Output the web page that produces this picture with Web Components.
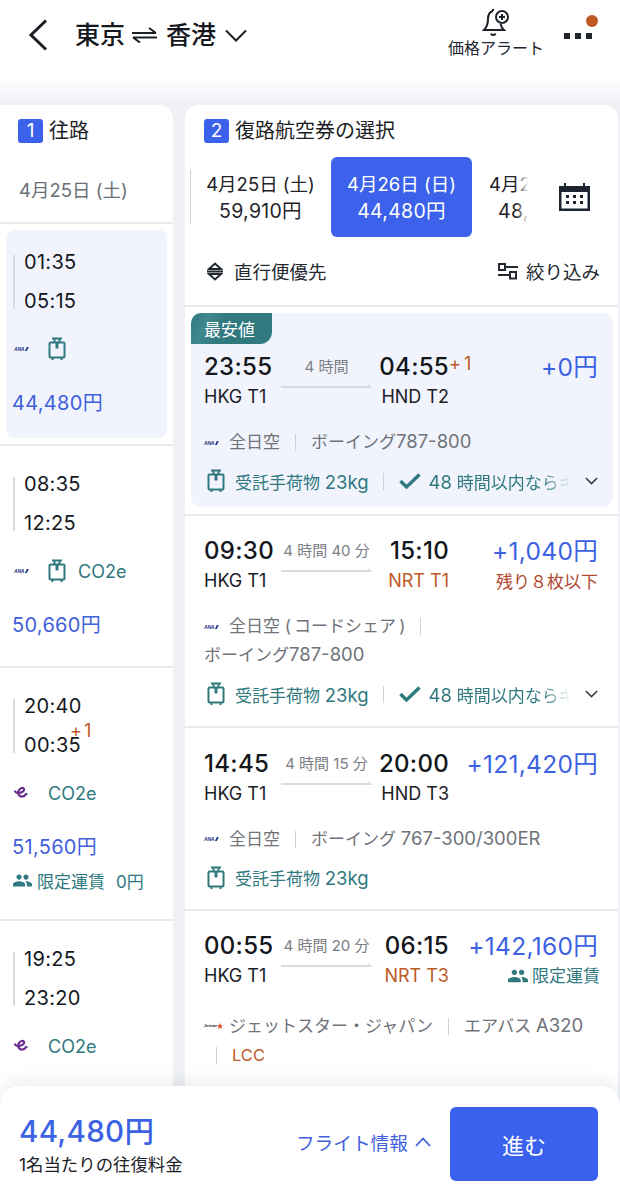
<!DOCTYPE html>
<html lang="ja">
<head>
<meta charset="utf-8">
<title>東京 香港</title>
<style>
    html, body { margin: 0; padding: 0; }
    body {
        width: 620px;
        height: 1200px;
        overflow: hidden;
        position: relative;
        background: #eff1f5;
        font-family: Inter, "Noto Sans CJK JP", sans-serif;
        color: #15181e;
    }
    #columns { display: flex; gap: 12px; width: 618px; }
</style>
</head>
<body>

<top-bar></top-bar>

<div id="columns">
    <outbound-panel>
        <outbound-row dep="01:35" arr="05:15" logo="ana" bag price="44,480円" selected style="--h:222px"></outbound-row>
        <outbound-row dep="08:35" arr="12:25" logo="ana" bag co2 price="50,660円" style="--h:222px"></outbound-row>
        <outbound-row dep="20:40" arr="00:35" plus logo="e" co2 price="51,560円" limited style="--h:253px"></outbound-row>
        <outbound-row dep="19:25" arr="23:20" logo="e" co2 style="--h:220px"></outbound-row>
    </outbound-panel>

    <return-panel>
        <flight-card cheapest dep="23:55" dur="4 時間" arr="04:55" plus from="HKG T1" to="HND T2" price="+0円"
            name="全日空" craft="ボーイング787-800" bag refund></flight-card>
        <flight-card style="--top:20px;--gap:16px;--bottom:17px" dep="09:30" dur="4 時間 40 分" arr="15:10" from="HKG T1" to="NRT T1" narita
            price="+1,040円" note="残り８枚以下"
            name="全日空 (&thinsp;コードシェア&thinsp;)" craft="ボーイング787-800" wrap="craft" bag refund></flight-card>
        <flight-card style="--top:21px;--gap:15.5px;--bottom:16.5px" dep="14:45" dur="4 時間 15 分" arr="20:00" from="HKG T1" to="HND T3"
            price="+121,420円"
            name="全日空" craft="ボーイング 767-300/300ER" bag></flight-card>
        <flight-card style="--top:20px;--gap:20.5px;--bottom:60px" dep="00:55" dur="4 時間 20 分" arr="06:15" from="HKG T1" to="NRT T3" narita
            price="+142,160円" limited logo="jetstar"
            name="ジェットスター・ジャパン" craft="エアバス A320" wrap="lcc" lcc></flight-card>
    </return-panel>
</div>

<bottom-bar></bottom-bar>

<script>
const icons = {
    luggage: `<svg width="18" height="24" viewBox="0 0 18 24" fill="none" stroke="currentColor" stroke-width="2">
        <path d="M4 1.500h10M6.500 1.500v4M11.500 1.500v4"/><rect x="1.500" y="5.500" width="15" height="15" rx="1"/>
        <path d="M9 5.500v6" stroke-width="3"/><path d="M4.500 20.500v2.500M13.500 20.500v2.500"/></svg>`,
    chevron: `<svg width="13" height="8" viewBox="0 0 15 9" fill="none" stroke="#333a44" stroke-width="1.700">
        <path d="M1 1l6.500 6.500L14 1"/></svg>`,
    group: `<svg width="22" height="22" viewBox="1 3 22 18" fill="currentColor">
        <path d="M16 11c1.660 0 2.990-1.340 2.990-3S17.660 5 16 5c-1.660 0-3 1.340-3 3s1.340 3 3 3zm-8 0c1.660 0 2.990-1.340 2.990-3S9.660 5 8 5C6.340 5 5 6.340 5 8s1.340 3 3 3zm0 2c-2.330 0-7 1.170-7 3.500V19h14v-2.500c0-2.330-4.670-3.500-7-3.500zm8 0c-.290 0-.620.020-.970.050 1.160.840 1.970 1.970 1.970 3.450V19h6v-2.500c0-2.330-4.670-3.500-7-3.500z"/></svg>`,
    ana: `<span style="display:inline-flex;align-items:center;width:15px;font:italic 700 5px/8px 'Liberation Sans',sans-serif;color:#1d3180;letter-spacing:-.2px">ANA<svg width="5" height="4" viewBox="0 0 5 4"><path d="M1 4L3 0h2L3 4z" fill="#1d3180"/></svg></span>`,
    e: `<svg width="15" height="14" viewBox="0 0 15 14" fill="none"><path d="M1 5.500C2 7 3 7.200 5 7c3-.4 5.500-2 5-4C9.500 1 6 1.500 4.500 5c-1.200 3.500 1.500 6 4 5.500 1.500-.3 3-1.500 3.500-2.500" stroke="#6b2b8f" stroke-width="2.200" stroke-linecap="round"/><circle cx="13.500" cy="8" r=".8" fill="#3aa0a8"/></svg>`,
    jetstar: `<span style="display:inline-flex;align-items:center;width:20px;font:700 4px/8px 'Liberation Sans',sans-serif;color:#222">Jetstar<svg width="6" height="6" viewBox="0 0 10 10"><path d="M5 0l1.500 3.500L10 4 7.300 6.300 8 10 5 8 2 10l.7-3.700L0 4l3.500-.5z" fill="#e4572e"/></svg></span>`
}

// latin runs sit a bit larger than the japanese around them
const latin = (s) => s.replace(/[A-Z0-9][\w\-\/]*/g, (m) => `<span class="n">${m}</span>`)

class TopBar extends HTMLElement {
    constructor() {
        super()
        this.attachShadow({ mode: 'open' }).innerHTML = `
        <style>
            :host { display: flex; align-items: flex-start; height: 105px; box-sizing: border-box; padding: 0 22px 0 28px;
                background: linear-gradient(#fff 0, #fff 76px, #eff1f5 104px); }
            .back { margin-top: 19px; }
            .route { display: flex; align-items: center; margin: 19px 0 0 27px; font-size: 25px; line-height: 32px; font-weight: 500; }
            .route .swap { margin: 0 9px 0 7px; display: flex; }
            .route .down { margin-left: 9px; display: flex; }
            .alert { margin-left: auto; display: flex; flex-direction: column; align-items: center; font-size: 16px; line-height: 20px; padding-top: 8px; color: #22262d; }
            .more { width: 34px; margin-left: 20px; position: relative; height: 60px; }
            .dots { position: absolute; left: 0; top: 33px; display: flex; gap: 5px; }
            .dots i { width: 6px; height: 6px; background: #20242b; }
            .dot { position: absolute; left: 22px; top: 15px; width: 12px; height: 12px; border-radius: 50%; background: #bd5a26; }
        </style>
        <svg class="back" width="20" height="32" viewBox="0 0 20 32" fill="none" stroke="#1c2027" stroke-width="3"><path d="M18 1.500L3 16l15 14.500"/></svg>
        <div class="route">
            <span>東京</span>
            <svg class="swap" width="25" height="16" viewBox="0 0 25 16" fill="none" stroke="#1c2027" stroke-width="2"><path d="M0 6h24M17 1l7 5M25 10.500H1M8 15.500l-7-5"/></svg>
            <span>香港</span>
            <svg class="down" width="22" height="13" viewBox="0 0 22 13" fill="none" stroke="#1c2027" stroke-width="2"><path d="M1 1.500l10 10 10-10"/></svg>
        </div>
        <div class="alert">
            <svg width="28" height="30" viewBox="0 0 28 30" fill="none" stroke="#1c2027" stroke-width="2">
                <path d="M11 3C7 4 6 7 6 11c0 5-1 8-4 11h20c-2-2-3-4-3.500-6"/><path d="M11 3V1"/><path d="M9 25.500c.5 2 4 2 4.500 0" />
                <circle cx="20" cy="9" r="6" fill="#fff"/><path d="M20 6v6M17 9h6"/></svg>
            <span>価格アラート</span>
        </div>
        <div class="more"><div class="dots"><i></i><i></i><i></i></div><div class="dot"></div></div>`
    }
}

class StepTitle extends HTMLElement {
    constructor() {
        super()
        this.attachShadow({ mode: 'open' }).innerHTML = `
        <style>
            :host { display: flex; align-items: center; gap: 6px; font-size: 20px; line-height: 24px; color: #1a1d23; }
            b { width: 25px; height: 24px; background: #3c62ec; color: #fff; border-radius: 3px; font-weight: 400; font-size: 19px;
                display: flex; align-items: center; justify-content: center; }
        </style>
        <b>${this.getAttribute('num')}</b><span><slot></slot></span>`
    }
}

class OutboundPanel extends HTMLElement {
    constructor() {
        super()
        this.attachShadow({ mode: 'open' }).innerHTML = `
        <style>
            :host { display: block; width: 173px; height: 1095px; background: #fff; border-radius: 0 14px 0 0; overflow: hidden; }
            .head { height: 119px; box-sizing: border-box; padding: 14px 0 0 18px; border-bottom: 2px solid #e9eaed; }
            .date { margin: 34px 0 0 1px; font-size: 18.500px; line-height: 26px; color: #6b6f76; }
        </style>
        <div class="head">
            <step-title num="1">往路</step-title>
            <div class="date">4月25日 (土)</div>
        </div>
        <slot></slot>`
    }
}

class OutboundRow extends HTMLElement {
    constructor() {
        super()
        const logo = icons[this.getAttribute('logo')]
        const price = this.getAttribute('price')
        this.attachShadow({ mode: 'open' }).innerHTML = `
        <style>
            :host { display: block; height: var(--h); box-sizing: border-box; padding: 6px 6px 0; border-bottom: 2px solid #e9eaed; }
            .box { height: 208px; box-sizing: border-box; padding: 13px 0 0 7px; border-radius: 8px; }
            :host([selected]) .box { background: #f1f4fd; }
            .times { display: flex; align-items: center; gap: 9px; font-size: 20px; line-height: 39px; letter-spacing: .3px; }
            .bar { width: 2px; height: 54px; background: #d9dbdf; }
            .arr { position: relative; }
            .plus { position: absolute; left: 46px; top: -15px; color: #bd5a26; font-size: 18px; letter-spacing: 2px; }
            .meta { display: flex; align-items: center; height: 30px; margin-top: 13px; color: #30797f; font-size: 18px; }
            .logo { width: 34px; display: flex; align-items: center; margin-left: 1px; }
            .bag { display: flex; width: 30px; }
            .price { margin-top: 24px; margin-left: -1px; height: 30px; font-size: 20px; line-height: 30px; color: #3f5fdb; letter-spacing: .3px; }
            .limited { display: flex; align-items: center; gap: 5px; height: 30px; margin-top: 3px; font-size: 17px; color: #30797f; white-space: nowrap; }
            .limited svg { width: 19px; height: 19px; }
            .limited em { font-style: normal; margin-left: 6px; }
        </style>
        <div class="box">
            <div class="times">
                <div class="bar"></div>
                <div><div>${this.getAttribute('dep')}</div><div class="arr">${this.getAttribute('arr')}${this.hasAttribute('plus') ? '<span class="plus">+1</span>' : ''}</div></div>
            </div>
            <div class="meta">
                <span class="logo">${logo}</span>
                ${this.hasAttribute('bag') ? `<span class="bag">${icons.luggage}</span>` : ''}
                ${this.hasAttribute('co2') ? '<span>CO2e</span>' : ''}
            </div>
            ${price ? `<div class="price">${price}</div>` : ''}
            ${this.hasAttribute('limited') ? `<div class="limited">${icons.group}<span>限定運賃</span><em>0円</em></div>` : ''}
        </div>`
    }
}

class DateTab extends HTMLElement {
    constructor() {
        super()
        this.attachShadow({ mode: 'open' }).innerHTML = `
        <style>
            :host { flex: 0 0 141px; height: 80px; box-sizing: border-box; padding-top: 14px; border-radius: 6px; text-align: center; color: #1f2329; white-space: nowrap; }
            :host([active]) { background: #3c62ec; color: #fff; }
            :host([cut]) { text-align: left; padding-left: 17px; flex-basis: 57px; }
            :host([cut]) div + div { padding-left: 9px; }
            div { font-size: 18.500px; line-height: 27px; }
            div + div { font-size: 19.500px; letter-spacing: .3px; }
        </style>
        <div>${this.getAttribute('date')}</div><div>${this.getAttribute('price')}</div>`
    }
}

class ReturnPanel extends HTMLElement {
    constructor() {
        super()
        this.attachShadow({ mode: 'open' }).innerHTML = `
        <style>
            :host { display: block; width: 433px; height: 1095px; background: #fff; border-radius: 14px 14px 0 0; overflow: hidden; }
            .title { padding: 14px 0 0 19px; height: 52px; box-sizing: border-box; }
            .strip-row { display: flex; align-items: center; height: 80px; padding-left: 5px; }
            .strip { position: relative; display: flex; width: 340px; height: 80px; }
            .strip::before { content: ''; position: absolute; left: 0; top: 13px; width: 1px; height: 54px; background: #cfd1d6; }
            .strip::after { content: ''; position: absolute; right: 0; top: 0; width: 14px; height: 80px; background: linear-gradient(to right, rgba(255,255,255,0), #fff 90%); }
            .cal { margin-left: 27px; display: flex; }
            .sort { display: flex; align-items: center; height: 70px; box-sizing: border-box; padding: 0 18px 0 22px; border-bottom: 2px solid #e9eaed; font-size: 18.500px; color: #24282f; }
            .sort svg { flex: none; }
            .sort span { margin-left: 11px; }
            .sort .filter { margin-left: auto; }
            .sort .filter + span { margin-left: 8px; }
        </style>
        <div class="title"><step-title num="2">復路航空券の選択</step-title></div>
        <div class="strip-row">
            <div class="strip">
                <date-tab date="4月25日 (土)" price="59,910円"></date-tab>
                <date-tab active date="4月26日 (日)" price="44,480円"></date-tab>
                <date-tab cut date="4月2" price="48,"></date-tab>
            </div>
            <svg class="cal" width="35" height="28" viewBox="0 0 35 28" fill="#1c2430">
                <path d="M7 0h2v3H7zM26 0h2v3h-2z"/>
                <path fill-rule="evenodd" d="M2 3h31v25H2zM4.500 9v16.500h26V9z"/>
                <path d="M9 12h3v3H9zM16 12h3v3h-3zM23 12h3v3h-3zM9 18h3v3H9zM16 18h3v3h-3zM23 18h3v3h-3z"/>
            </svg>
        </div>
        <div class="sort">
            <svg width="16" height="19" viewBox="0 0 16 19" fill="none" stroke="#24282f" stroke-width="2"><path d="M2 7l6-5.500L14 7zM0 9.500h16M2 12l6 5.500L14 12z"/></svg>
            <span>直行便優先</span>
            <svg class="filter" width="20" height="17" viewBox="0 0 20 17" fill="none" stroke="#24282f" stroke-width="2"><rect x="1" y="1" width="6" height="6"/><path d="M7 4h13M0 12h12"/><rect x="12" y="9" width="6" height="6.500"/></svg>
            <span>絞り込み</span>
        </div>
        <slot></slot>`
    }
}

class FlightCard extends HTMLElement {
    constructor() {
        super()
        const a = (n) => this.getAttribute(n)
        const has = (n) => this.hasAttribute(n)
        const sep = '<i class="sep"></i>'
        const brk = '<i class="break"></i>'
        const wrap = a('wrap')
        this.attachShadow({ mode: 'open' }).innerHTML = `
        <style>
            :host { display: block; border-bottom: 2px solid #e9eaed; box-sizing: border-box; padding: var(--top, 0) 20px var(--bottom, 0) 19px; }
            :host([cheapest]) { padding: 6px 5px 7px 6px; }
            :host([cheapest]) .box { background: #f1f4fd; border-radius: 10px; padding: 0 15px 11px 13px; }
            .badge { display: none; }
            :host([cheapest]) .badge { display: flex; align-items: center; width: 81px; height: 31px; box-sizing: border-box; padding-left: 13px; margin: 0 0 8px -13px;
                background: linear-gradient(115deg, #30797f, #3f888e 20%, #30797f 40%); border-radius: 10px 0 12px 0; color: #fff; font-size: 17px; }
            .times { display: grid; grid-template-columns: 76px 93px 76px 1fr; grid-template-rows: 30px 30px; }
            .t { font-size: 24px; line-height: 30px; font-weight: 500; color: #14171c; letter-spacing: .3px; }
            .ap { font-size: 18px; line-height: 30px; color: #1c2027; white-space: nowrap; }
            .arr { text-align: right; position: relative; }
            .plus { position: absolute; left: 76px; top: -3px; font-size: 18px; font-weight: 400; color: #bd5a26; letter-spacing: 3px; }
            .mid { grid-row: 1 / 3; grid-column: 2; display: flex; flex-direction: column; align-items: center; }
            .dur { font-size: 15px; line-height: 30px; color: #7b7e84; white-space: nowrap; }
            .arrow { margin-top: 2px; }
            .narita { color: #bd5a26; }
            .price { grid-column: 4; grid-row: 1; text-align: right; font-size: 24.500px; line-height: 30px; color: #3c62e4; white-space: nowrap; letter-spacing: .3px; }
            .note { grid-column: 4; grid-row: 2; justify-self: end; text-align: right; font-size: 17px; line-height: 32px; color: #b0472f; white-space: nowrap; }
            .limited { grid-column: 4; grid-row: 2; justify-self: end; display: flex; align-items: center; gap: 4px; font-size: 17px; line-height: 34px; color: #30797f; margin-right: -2px; }
            .limited svg { width: 20px; height: 20px; }
            .air { display: flex; flex-wrap: wrap; align-items: center; margin-top: var(--gap, 16px); font-size: 17px; line-height: 29px; color: #6f7278; }
            .air > span { height: 29px; }
            .air .logo { display: flex; align-items: center; width: 25px; }
            .n { font-size: 18.500px; line-height: 1; }
            .sep { width: 1px; height: 17px; background: #cfd1d6; margin: 0 15px; }
            .break { flex-basis: 100%; height: 0; }
            .lcc { color: #bd5a26; font-size: 16.500px; }
            .extras { display: flex; align-items: center; height: 30px; margin-top: 9px; color: #30797f; font-size: 17px; white-space: nowrap; }
            .extras > svg:first-child { margin-left: 3px; margin-right: 10px; flex: none; }
            .extras .sep { margin: 0 15px 0 14px; }
            .extras .check { flex: none; margin-right: 8px; }
            .refund { flex: none; width: 141px; -webkit-mask-image: linear-gradient(to right, #000 80%, transparent 100%); mask-image: linear-gradient(to right, #000 80%, transparent 100%); }
            .more { display: flex; margin-left: 15px; }
        </style>
        <div class="box">
            <div class="badge">最安値</div>
            <div class="times">
                <div class="t">${a('dep')}</div>
                <div class="mid">
                    <div class="dur">${a('dur')}</div>
                    <svg class="arrow" width="92" height="5" viewBox="0 0 92 5"><path d="M0 2h87V0l5 4H0z" fill="#d9dbdf"/></svg>
                </div>
                <div class="t arr">${a('arr')}${has('plus') ? '<span class="plus">+1</span>' : ''}</div>
                <div class="price">${a('price')}</div>
                <div class="ap">${a('from')}</div>
                <div class="ap arr ${has('narita') ? 'narita' : ''}" style="grid-column:3;grid-row:2">${a('to')}</div>
                ${a('note') ? `<div class="note">${a('note')}</div>` : ''}
                ${has('limited') ? `<div class="limited">${icons.group}<span>限定運賃</span></div>` : ''}
            </div>
            <div class="air">
                <span class="logo">${icons[a('logo') || 'ana']}</span>
                <span>${a('name')}</span>${sep}
                ${wrap === 'craft' ? brk : ''}
                <span>${latin(a('craft'))}</span>
                ${has('lcc') ? `${brk}<i class="sep" style="margin-left:12px"></i><span class="lcc">LCC</span>` : ''}
            </div>
            ${has('bag') ? `<div class="extras">
                ${icons.luggage}<span>受託手荷物 <span class="n">23kg</span></span>
                ${has('refund') ? `${sep}<svg class="check" width="22" height="16" viewBox="0 0 22 16" fill="none" stroke="currentColor" stroke-width="3.400"><path d="M1.500 8l6 6L20.500 1.500"/></svg>
                <div class="refund"><span class="n">48</span> 時間以内ならキ</div>
                <span class="more">${icons.chevron}</span>` : ''}
            </div>` : ''}
        </div>`
    }
}

class BottomBar extends HTMLElement {
    constructor() {
        super()
        this.attachShadow({ mode: 'open' }).innerHTML = `
        <style>
            :host { position: absolute; left: 0; right: 0; bottom: 0; height: 114px; box-sizing: border-box; display: flex; align-items: center;
                padding: 2px 22px 0 19px; background: #fff; border-radius: 20px 20px 0 0; box-shadow: 0 -6px 16px rgba(30, 40, 60, .08); }
            .sum { font-size: 29.500px; line-height: 40px; color: #3c62e4; font-weight: 500; letter-spacing: .3px; }
            .per { font-size: 17.400px; line-height: 26px; color: #1c2027; margin-top: 1px; }
            .info { margin-left: auto; margin-bottom: 5px; display: flex; align-items: center; gap: 7px; font-size: 18.700px; color: #3f5fdb; }
            button { margin-left: 19px; width: 148px; height: 74px; border: 0; border-radius: 6px; background: #3a60ee; color: #fff; font: 400 22px Inter, "Noto Sans CJK JP", sans-serif; }
        </style>
        <div><div class="sum">44,480円</div><div class="per">1名当たりの往復料金</div></div>
        <div class="info">フライト情報
            <svg width="16" height="10" viewBox="0 0 16 10" fill="none" stroke="currentColor" stroke-width="1.800"><path d="M1 9l7-7.500L15 9"/></svg>
        </div>
        <button>進む</button>`
    }
}

customElements.define('top-bar', TopBar)
customElements.define('step-title', StepTitle)
customElements.define('outbound-panel', OutboundPanel)
customElements.define('outbound-row', OutboundRow)
customElements.define('date-tab', DateTab)
customElements.define('return-panel', ReturnPanel)
customElements.define('flight-card', FlightCard)
customElements.define('bottom-bar', BottomBar)
</script>
</body>
</html>
